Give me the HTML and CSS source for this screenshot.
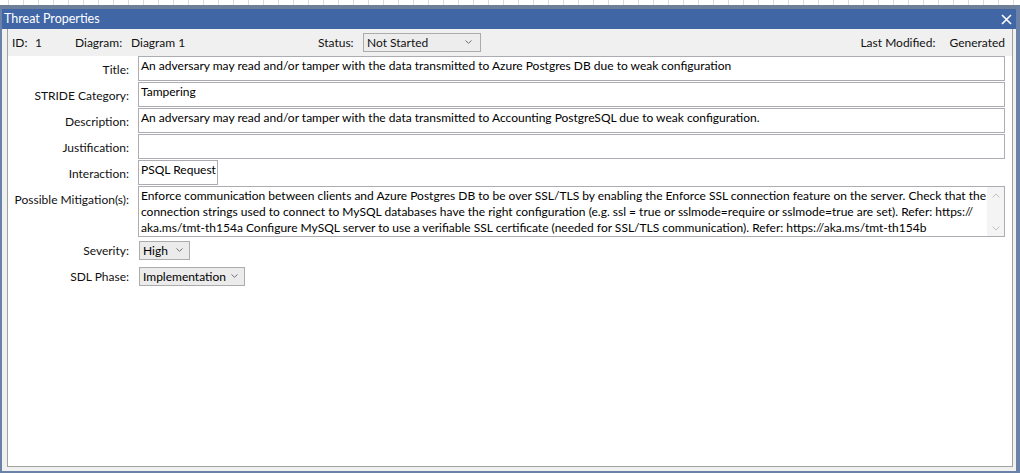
FILE: index.html
```html
<!DOCTYPE html>
<html>
<head>
<meta charset="utf-8">
<link rel="stylesheet" href="styles.css">
</head>
<body>
<div class="topstrip"></div>
<div class="window">
  <div class="titlebar">
    <span class="title">Threat Properties</span>
    <svg class="close" width="11" height="11" viewBox="0 0 11 11"><path d="M1 1 L10 10 M10 1 L1 10" stroke="#ffffff" stroke-width="1.6" fill="none"/></svg>
  </div>
  <div class="body">
    <div class="panel">
      <div class="header">
        <div class="hgroup g-id"><span class="hl hl-id">ID:</span><span>1</span></div>
        <div class="hgroup g-diag"><span class="hl hl-diag">Diagram:</span><span>Diagram 1</span></div>
        <div class="hgroup g-status"><span class="hl hl-status">Status:</span>
          <div class="combo combo-status"><span>Not Started</span>
            <svg class="chev" width="7" height="4" viewBox="0 0 7 4"><path d="M0.5 0.5 L3.5 3.3 L6.5 0.5" stroke="#707070" stroke-width="1" fill="none"/></svg>
          </div>
        </div>
        <div class="hgroup g-mod"><span class="hl hl-mod">Last Modified:</span><span>Generated</span></div>
      </div>
      <div class="form">
        <div class="label">Title:</div>
        <div class="tb">An adversary may read and/or tamper with the data transmitted to Azure Postgres DB due to weak configuration</div>

        <div class="label">STRIDE Category:</div>
        <div class="tb">Tampering</div>

        <div class="label">Description:</div>
        <div class="tb">An adversary may read and/or tamper with the data transmitted to Accounting PostgreSQL due to weak configuration.</div>

        <div class="label">Justification:</div>
        <div class="tb"></div>

        <div class="label">Interaction:</div>
        <div class="tb tb-fit">PSQL Request</div>

        <div class="label">Possible Mitigation(s):</div>
        <div class="tb tb-multi">
          <div class="lines">
            <span class="ln">Enforce communication between clients and Azure Postgres DB to be over SSL/TLS by enabling the Enforce SSL connection feature on the server. Check that the</span>
            <span class="ln">connection strings used to connect to MySQL databases have the right configuration (e.g. ssl = true or sslmode=require or sslmode=true are set). Refer: https://</span>
            <span class="ln">aka.ms/tmt-th154a Configure MySQL server to use a verifiable SSL certificate (needed for SSL/TLS communication). Refer: https://aka.ms/tmt-th154b</span>
          </div>
          <div class="sbar">
            <svg width="8" height="5" viewBox="0 0 8 5"><path d="M0.5 4.5 L4 1 L7.5 4.5" stroke="#c2c2c2" stroke-width="1" fill="none"/></svg>
            <svg width="8" height="5" viewBox="0 0 8 5"><path d="M0.5 0.5 L4 4 L7.5 0.5" stroke="#c2c2c2" stroke-width="1" fill="none"/></svg>
          </div>
        </div>

        <div class="label label-mid">Severity:</div>
        <div class="cell-mid">
          <div class="combo combo-sev"><span>High</span>
            <svg class="chev" width="7" height="4" viewBox="0 0 7 4"><path d="M0.5 0.5 L3.5 3.3 L6.5 0.5" stroke="#707070" stroke-width="1" fill="none"/></svg>
          </div>
        </div>

        <div class="label label-mid">SDL Phase:</div>
        <div class="cell-mid">
          <div class="combo combo-sdl"><span>Implementation</span>
            <svg class="chev" width="7" height="4" viewBox="0 0 7 4"><path d="M0.5 0.5 L3.5 3.3 L6.5 0.5" stroke="#707070" stroke-width="1" fill="none"/></svg>
          </div>
        </div>
      </div>
    </div>
  </div>
</div>
</body>
</html>
```

FILE: styles.css
```css
* { box-sizing: border-box; }
html, body { margin: 0; padding: 0; }
body {
  width: 1020px;
  height: 473px;
  overflow: hidden;
  background: #ffffff;
  font-family: Lato, "Open Sans", sans-serif;
  font-size: 12px;
  color: #000000;
}
.topstrip {
  height: 5px;
  background: repeating-linear-gradient(90deg, #ffffff 0px, #ffffff 8px, #dcdcdc 8px, #dcdcdc 9px, #ffffff 9px, #ffffff 15px);
}
.window {
  height: 468px;
  border-style: solid;
  border-color: #6a82a8;
  border-width: 4px 4px 2px 2px;
  border-top-color: #6e7f99;
  display: flex;
  flex-direction: column;
}
.titlebar {
  height: 20px;
  background: #4066a5;
  color: #ffffff;
  display: flex;
  align-items: center;
  justify-content: space-between;
  padding: 0 4px 0 2px;
}
.title { font-size: 12.5px; line-height: 16px; }
.close { display: block; margin-top: 1px; }
.body {
  flex: 1;
  background: #f0f0f0;
  padding: 0 3px 4px 5px;
  display: flex;
}
.panel {
  flex: 1;
  border: 1px solid #a0a0a0;
  border-top: none;
  display: flex;
  flex-direction: column;
}
.header {
  height: 27px;
  background: #f0f0f0;
  display: flex;
  align-items: center;
  padding: 0 7px 0 4px;
  line-height: 16px;
  color: #111;
}
.hgroup { display: flex; align-items: center; }
.hl { display: inline-block; }
.hl-id { width: 23px; }
.g-id { width: 63px; }
.hl-diag { width: 56px; }
.g-diag { width: 243px; }
.hl-status { width: 45px; }
.g-mod { margin-left: auto; }
.hl-mod { width: 89px; }
.combo {
  height: 19px;
  border: 1px solid #acacac;
  background: #ebebeb;
  display: flex;
  align-items: center;
  justify-content: space-between;
  padding: 0 6px 0 3px;
  line-height: 16px;
}
.combo .chev { display: block; margin-top: -2px; }
.combo-status { width: 118px; background: #ededed; padding-right: 8px; }
.combo-sev { width: 51px; margin-left: 1px; }
.combo-sdl { width: 106px; margin-left: 1px; }
.form {
  flex: 1;
  background: #ffffff;
  display: grid;
  grid-template-columns: 125px 867px;
  column-gap: 5px;
  row-gap: 1px;
  align-content: start;
  line-height: 16px;
}
.label {
  text-align: right;
  padding: 6px 4px 0 0;
  color: #111;
  white-space: nowrap;
}
.label-mid, .cell-mid {
  height: 25px;
  display: flex;
  align-items: center;
}
.label-mid { justify-content: flex-end; padding-top: 0; }
.tb {
  height: 25px;
  border: 1px solid #abadb3;
  padding: 1px 2px;
  white-space: nowrap;
  overflow: hidden;
}
.tb-fit { justify-self: start; padding-right: 1px; }
.tb-multi {
  height: 51px;
  display: flex;
  padding-right: 0;
}
.lines { flex: 1; display: flex; flex-direction: column; }
.ln { display: block; white-space: nowrap; }
.sbar {
  width: 17px;
  margin: -1px 0 -1px 0;
  background: #f4f4f4;
  display: flex;
  flex-direction: column;
  justify-content: space-between;
  align-items: center;
  padding: 6px 0 5px;
}
.sbar svg { display: block; }
```
